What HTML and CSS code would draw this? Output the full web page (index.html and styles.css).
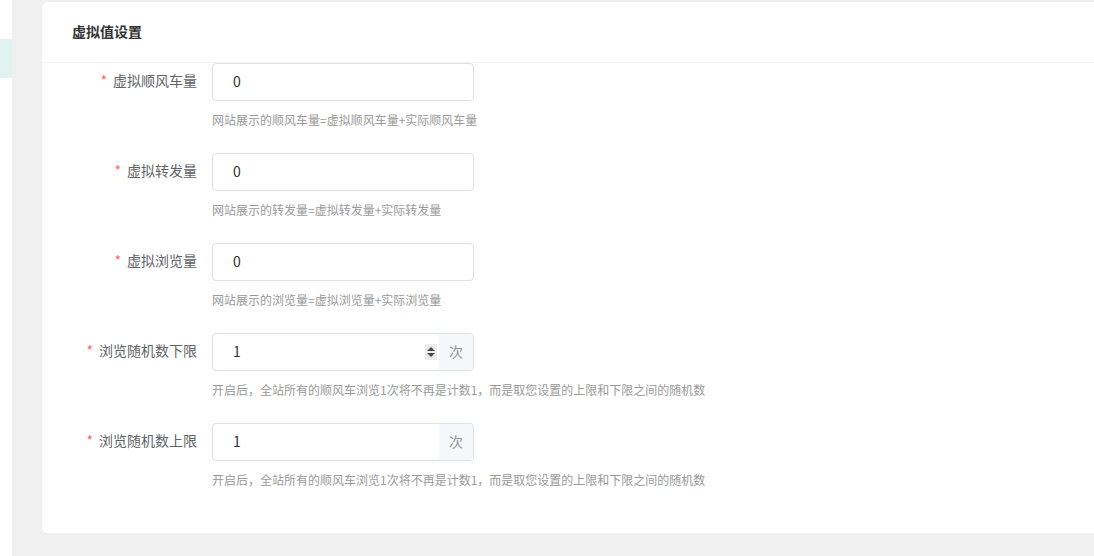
FILE: index.html
```html
<!DOCTYPE html>
<html lang="zh-CN">
<head>
<meta charset="utf-8">
<title>虚拟值设置</title>
<link rel="stylesheet" href="styles.css">
</head>
<body>
  <div class="layout">
    <div class="side">
      <div class="side-active"></div>
    </div>

    <div class="main">
      <div class="card">
        <div class="card-header">虚拟值设置</div>

        <div class="card-body">
          <div class="form-item">
            <label class="form-label"><span class="req">*</span>虚拟顺风车量</label>
            <div class="form-content">
              <div class="input"><span class="input-value">0</span></div>
              <p class="help">网站展示的顺风车量=虚拟顺风车量+实际顺风车量</p>
            </div>
          </div>

          <div class="form-item">
            <label class="form-label"><span class="req">*</span>虚拟转发量</label>
            <div class="form-content">
              <div class="input"><span class="input-value">0</span></div>
              <p class="help">网站展示的转发量=虚拟转发量+实际转发量</p>
            </div>
          </div>

          <div class="form-item">
            <label class="form-label"><span class="req">*</span>虚拟浏览量</label>
            <div class="form-content">
              <div class="input"><span class="input-value">0</span></div>
              <p class="help">网站展示的浏览量=虚拟浏览量+实际浏览量</p>
            </div>
          </div>

          <div class="form-item">
            <label class="form-label"><span class="req">*</span>浏览随机数下限</label>
            <div class="form-content">
              <div class="input">
                <span class="input-value">1</span>
                <span class="spin">
                  <svg width="12" height="16" viewBox="0 0 12 16">
                    <rect x="0" y="0" width="12" height="16" fill="#ececec"/>
                    <path d="M2 7 L6 3 L10 7 Z" fill="#4a4a4a"/>
                    <path d="M2 9 L6 13 L10 9 Z" fill="#4a4a4a"/>
                  </svg>
                </span>
                <span class="append">次</span>
              </div>
              <p class="help">开启后，全站所有的顺风车浏览1次将不再是计数1，而是取您设置的上限和下限之间的随机数</p>
            </div>
          </div>

          <div class="form-item">
            <label class="form-label"><span class="req">*</span>浏览随机数上限</label>
            <div class="form-content">
              <div class="input">
                <span class="input-value">1</span>
                <span class="append">次</span>
              </div>
              <p class="help">开启后，全站所有的顺风车浏览1次将不再是计数1，而是取您设置的上限和下限之间的随机数</p>
            </div>
          </div>
        </div>
      </div>
    </div>
  </div>
</body>
</html>
```

FILE: styles.css
```css
html, body {
  margin: 0;
  padding: 0;
  height: 100%;
  overflow: hidden;
  font-family: "Noto Sans CJK SC", "Liberation Sans", sans-serif;
}

.layout {
  display: flex;
  height: 556px;
  background: #f0f0f0;
}

/* left menu edge */
.side {
  width: 12px;
  flex-shrink: 0;
  background: #fff;
  padding-top: 39px;
}
.side-active {
  height: 39px;
  background: #e1f3f1;
}

.main {
  flex: 1;
  padding: 2px 0 0 30px;
  overflow: hidden;
}

.card {
  width: 1100px;
  background: #fff;
  border-radius: 6px;
  padding-bottom: 43px;
}

.card-header {
  height: 60px;
  line-height: 58px;
  padding-left: 30px;
  font-size: 14px;
  font-weight: bold;
  color: #333;
  border-bottom: 1px solid #f2f2f2;
}

/* form rows */
.form-item {
  display: flex;
  margin-bottom: 23px;
}
.form-item:last-child {
  margin-bottom: 0;
}

.form-label {
  width: 155px;
  padding-right: 15px;
  height: 38px;
  line-height: 35px;
  text-align: right;
  font-size: 14px;
  color: #606266;
}
.req {
  color: #f56c6c;
  margin-right: 6px;
}

.input {
  display: flex;
  align-items: center;
  width: 260px;
  height: 36px;
  border: 1px solid #dcdfe6;
  border-radius: 4px;
  overflow: hidden;
}
.input-value {
  flex: 1;
  padding-left: 20px;
  padding-bottom: 2px;
  font-size: 14px;
  color: #303133;
}
.spin {
  display: flex;
  margin-right: 2px;
}
.append {
  width: 34px;
  height: 36px;
  line-height: 35px;
  text-align: center;
  background: #f5f7fa;
  color: #909399;
  font-size: 14px;
}

.help {
  margin: 9px 0 0;
  line-height: 20px;
  font-size: 12px;
  color: #999;
}
```
